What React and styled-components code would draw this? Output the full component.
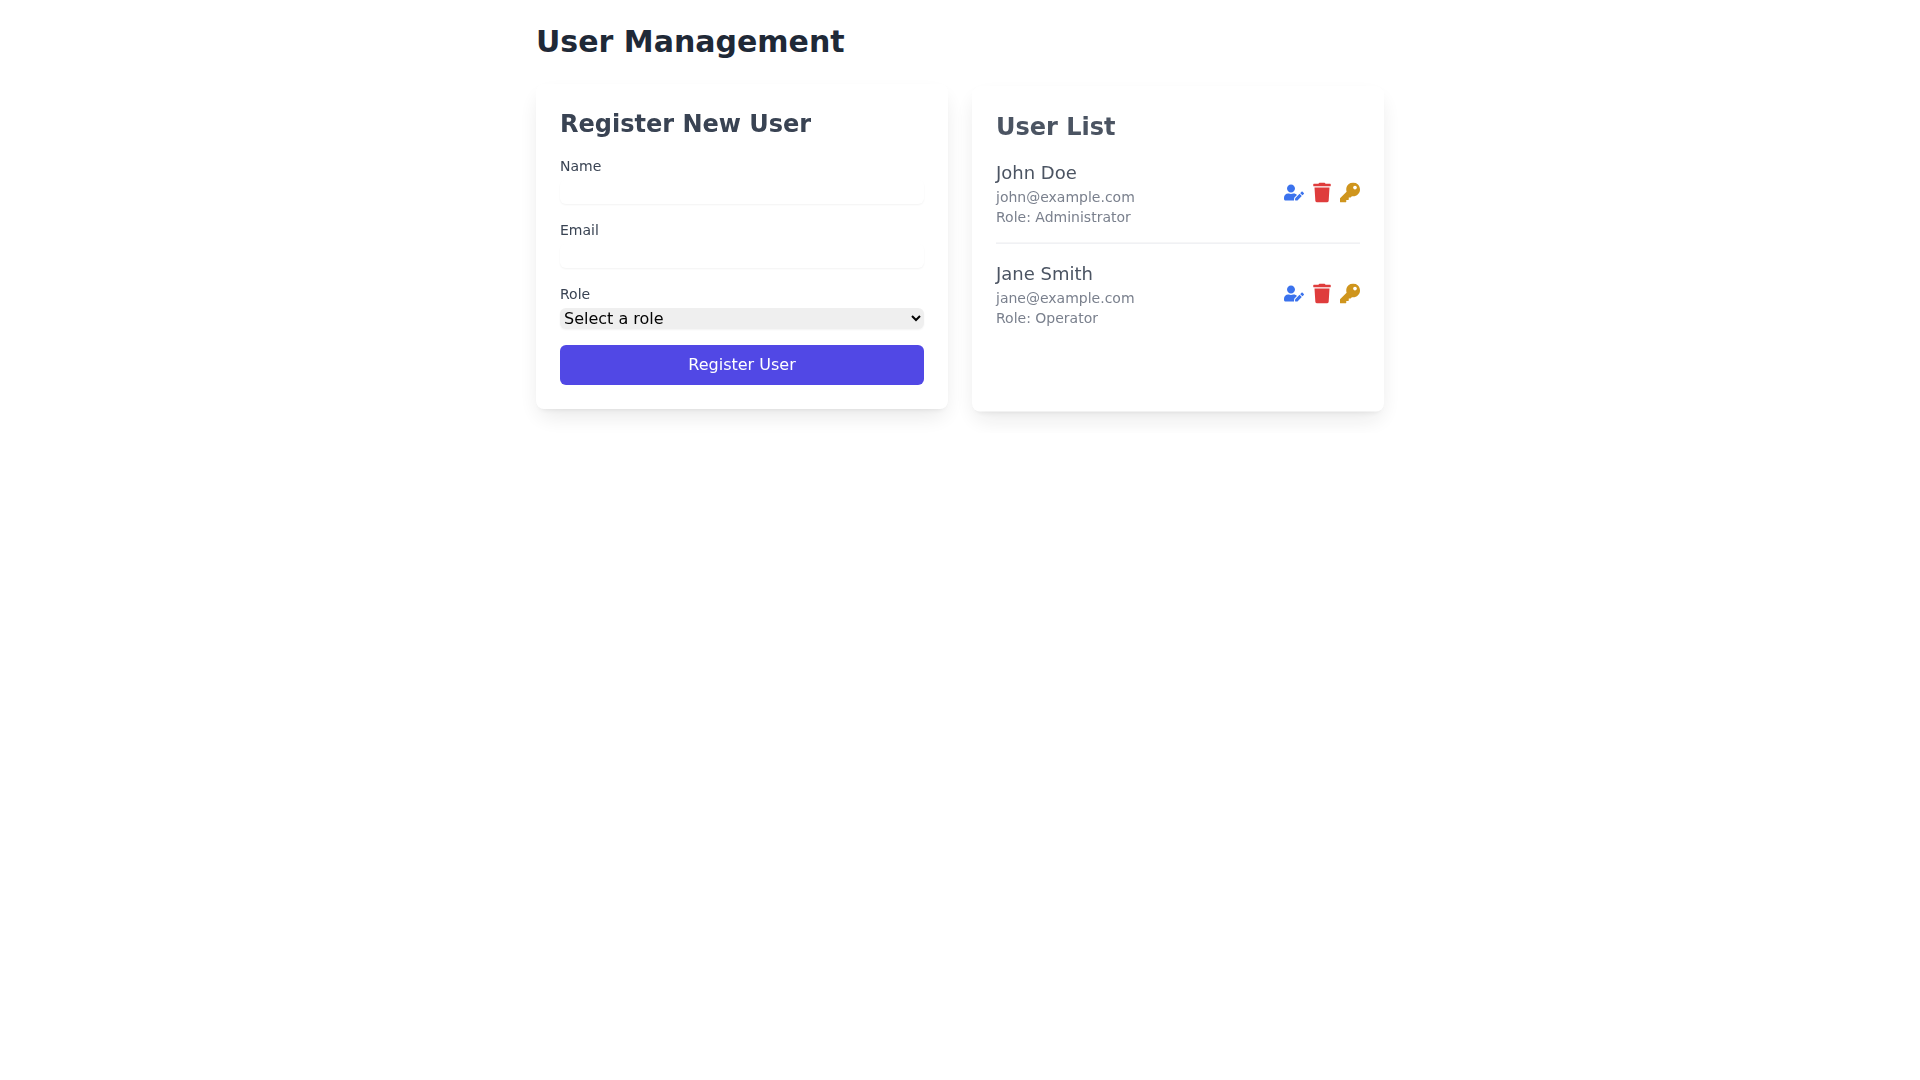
import React from 'react';
import styled, { createGlobalStyle } from 'styled-components';
import { FaUserEdit, FaTrash, FaKey } from 'react-icons/fa';

const Global = createGlobalStyle`
  *, *::before, *::after { box-sizing: border-box; border: 0 solid #e5e7eb; }
  html, body { margin: 0; padding: 0; background: #fff; }
  body { font-family: "DejaVu Sans", sans-serif; line-height: 1.5; }
`;
const Page = styled.main`
  max-width: 896px;
  margin: 0 auto;
  padding: 24px;
`;
const Title = styled.h1`
  margin: 0 0 24px;
  font-size: 30px;
  line-height: 36px;
  font-weight: 700;
  color: #1f2937;
`;
const Columns = styled.div`
  display: grid;
  grid-template-columns: 1fr 1fr;
  gap: 24px;
`;
const Card = styled.section`
  background: #fff;
  padding: 24px;
  border-radius: 8px;
  box-shadow: 0 10px 25px -3px rgba(0,0,0,.1), 0 4px 6px -4px rgba(0,0,0,.1);
  opacity: ${p => p.$fade};
  transform: translateY(${p => p.$shift}px);
  will-change: transform, opacity;
`;
const CardTitle = styled.h2`
  margin: 0 0 16px;
  font-size: 24px;
  line-height: 32px;
  font-weight: 700;
  color: ${p => p.$color};
`;
const Form = styled.form`
  display: flex;
  flex-direction: column;
  gap: 16px;
`;
const Label = styled.label`
  display: block;
  font-size: 14px;
  line-height: 20px;
  font-weight: 500;
  color: #374151;
`;
const TextInput = styled.input`
  display: block;
  width: 100%;
  height: 24px;
  margin-top: 4px;
  padding: 0;
  background: transparent;
  border-radius: 6px;
  outline: none;
  box-shadow: 0 1px 2px 0 rgba(0,0,0,.05);
  font: inherit;
`;
const RoleSelect = styled.select`
  display: block;
  width: 100%;
  height: 21px;
  margin-top: 4px;
  border-radius: 6px;
  background: #efefef;
  color: #000;
  font-family: inherit;
  font-size: 16px;
  box-shadow: 0 1px 2px 0 rgba(0,0,0,.05);
`;
const Submit = styled.button`
  width: 100%;
  height: 40px;
  border-radius: 6px;
  background: #4f46e5;
  color: #fff;
  font: inherit;
  font-size: 16px;
  font-weight: 400;
`;
const UserList = styled.ul`
  list-style: none;
  margin: 0;
  padding: 0;
`;
const UserRow = styled.li`
  display: flex;
  align-items: center;
  justify-content: space-between;
  padding: 0 0 16px;
  margin-bottom: 16px;
  border-bottom: ${p => (p.$last ? 0 : '1px solid #e5e7eb')};
`;
const UserName = styled.p`
  margin: 0;
  font-size: 18px;
  line-height: 28px;
  color: #374151;
`;
const UserMeta = styled.p`
  margin: 0;
  font-size: 14px;
  line-height: 20px;
  color: #6b7280;
`;
const Actions = styled.div`
  display: flex;
  align-items: center;
  gap: 8px;
`;
const IconButton = styled.button`
  display: block;
  padding: 0;
  background: none;
  color: ${p => p.$color};
  font-size: 20px;
  line-height: 24px;
  svg { display: block; }
`;

const users = [
  { name: 'John Doe', email: 'john@example.com', role: 'Administrator' },
  { name: 'Jane Smith', email: 'jane@example.com', role: 'Operator' },
];

export default function App() {
  return (
    <>
      <Global />
      <Page>
        <Title>User Management</Title>
        <Columns>
          <Card $fade={0.99} $shift={0}>
            <CardTitle $color="#374151">Register New User</CardTitle>
            <Form onSubmit={e => e.preventDefault()}>
              <div>
                <Label htmlFor="name">Name</Label>
                <TextInput id="name" type="text" />
              </div>
              <div>
                <Label htmlFor="email">Email</Label>
                <TextInput id="email" type="email" />
              </div>
              <div>
                <Label htmlFor="role">Role</Label>
                <RoleSelect id="role" defaultValue="">
                  <option value="">Select a role</option>
                  <option value="admin">Administrator</option>
                  <option value="operator">Operator</option>
                </RoleSelect>
              </div>
              <Submit type="submit">Register User</Submit>
            </Form>
          </Card>
          <Card $fade={0.9} $shift={2.6}>
            <CardTitle $color="#374151">User List</CardTitle>
            <UserList>
              {users.map((u, i) => (
                <UserRow key={u.email} $last={i === users.length - 1}>
                  <div>
                    <UserName>{u.name}</UserName>
                    <UserMeta>{u.email}</UserMeta>
                    <UserMeta>Role: {u.role}</UserMeta>
                  </div>
                  <Actions>
                    <IconButton $color="#2563eb" aria-label="Edit"><FaUserEdit size={20} /></IconButton>
                    <IconButton $color="#dc2626" aria-label="Delete"><FaTrash size={20} /></IconButton>
                    <IconButton $color="#ca8a04" aria-label="Key"><FaKey size={20} /></IconButton>
                  </Actions>
                </UserRow>
              ))}
            </UserList>
          </Card>
        </Columns>
      </Page>
    </>
  );
}
